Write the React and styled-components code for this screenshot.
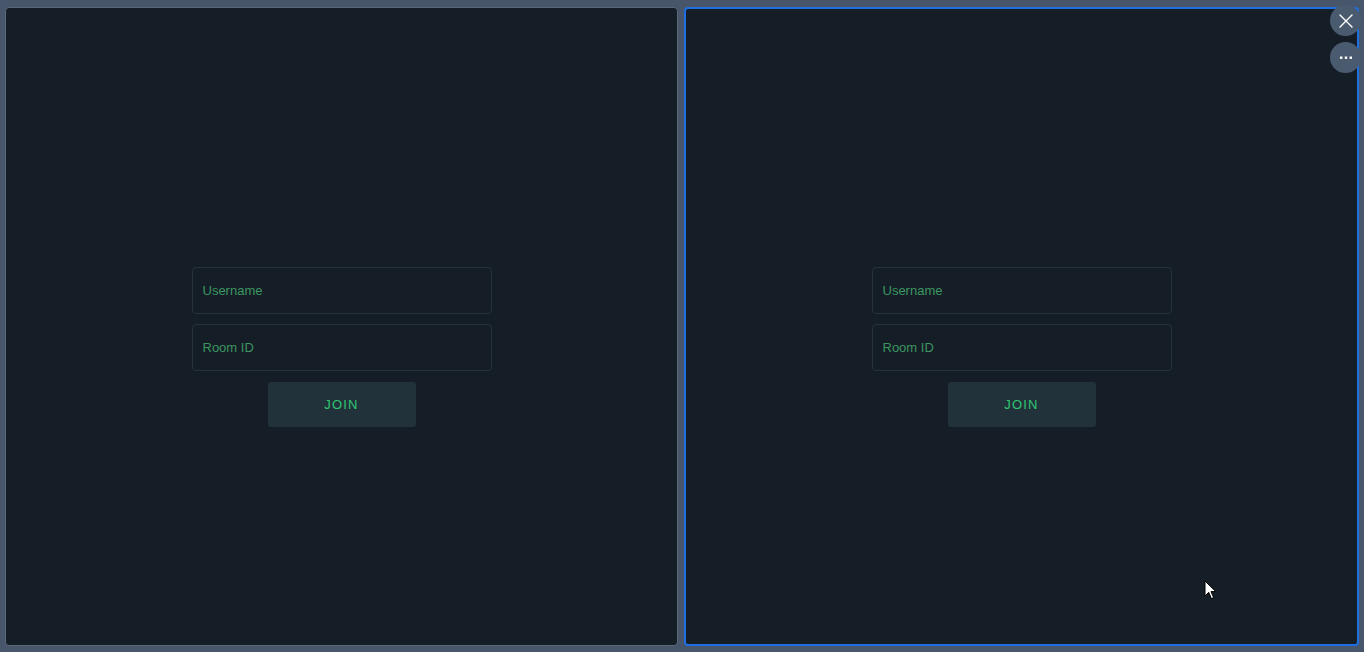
import React, { useState } from "react";
import styled, { createGlobalStyle } from "styled-components";

const GlobalStyle = createGlobalStyle`
  html, body {
    margin: 0;
    padding: 0;
    height: 100%;
    background: #47566a;
    font-family: "Liberation Sans", Arial, sans-serif;
  }
  #root {
    height: 100%;
  }
`;

function JoinForm() {
  const [username, setUsername] = useState("");
  const [room, setRoom] = useState("");

  return (
    <Form onSubmit={(e) => e.preventDefault()}>
      <Input
        placeholder="Username"
        value={username}
        onChange={(e) => setUsername(e.target.value)}
      />
      <Input
        placeholder="Room ID"
        value={room}
        onChange={(e) => setRoom(e.target.value)}
      />
      <JoinButton type="submit">JOIN</JoinButton>
    </Form>
  );
}

function App() {
  return (
    <>
      <GlobalStyle />
      <Screen>
        <Panel>
          <JoinForm />
        </Panel>
        <Panel active>
          <JoinForm />
          <Cursor viewBox="0 0 13 20">
            <path
              d="M1 1 L1 16 L4.7 12.3 L7.4 18.6 L9.6 17.6 L7 11.6 L11.8 11.6 Z"
              fill="#fff"
              stroke="#000"
              strokeWidth="1"
              strokeLinejoin="round"
            />
          </Cursor>
        </Panel>
        <Controls>
          <RoundButton aria-label="close">
            <svg width="14" height="14" viewBox="0 0 14 14">
              <path
                d="M1 1 L13 13 M13 1 L1 13"
                stroke="#fff"
                strokeWidth="1.4"
                strokeLinecap="round"
              />
            </svg>
          </RoundButton>
          <RoundButton aria-label="more">
            <svg width="14" height="4" viewBox="0 0 14 4">
              <rect x="1" y="0.5" width="2.4" height="2.4" fill="#fff" />
              <rect x="5.8" y="0.5" width="2.4" height="2.4" fill="#fff" />
              <rect x="10.6" y="0.5" width="2.4" height="2.4" fill="#fff" />
            </svg>
          </RoundButton>
        </Controls>
      </Screen>
    </>
  );
}

export default App;

const Screen = styled.div`
  position: relative;
  box-sizing: border-box;
  height: 652px;
  padding: 7px 5px 6px 5px;
  display: grid;
  grid-template-columns: 673px 675px;
  column-gap: 6px;
`;

const Panel = styled.div`
  position: relative;
  box-sizing: border-box;
  background: #151e27;
  border: 1px solid ${(props) => (props.active ? "#1f6fe0" : "#5b6878")};
  border-width: ${(props) => (props.active ? "2px" : "1px")};
  border-radius: 4px;
  display: flex;
  align-items: center;
  justify-content: center;
  padding-top: 41px;
`;

const Form = styled.form`
  display: flex;
  flex-direction: column;
  align-items: center;
  gap: 10px;
`;

const Input = styled.input`
  box-sizing: border-box;
  width: 300px;
  height: 47px;
  background: #151e27;
  border: 1px solid #26323c;
  border-radius: 4px;
  padding: 0 10px;
  font-family: "Liberation Sans", Arial, sans-serif;
  font-size: 13px;
  color: #3c9660;
  outline: none;

  &::placeholder {
    color: #3c9660;
  }
`;

const JoinButton = styled.button`
  box-sizing: border-box;
  width: 148px;
  height: 45px;
  margin-top: 1px;
  background: #22323b;
  border: none;
  border-radius: 3px;
  color: #2fc672;
  font-family: "Liberation Sans", Arial, sans-serif;
  font-size: 13px;
  letter-spacing: 1.2px;
  cursor: pointer;
`;

const Controls = styled.div`
  position: absolute;
  top: 5px;
  right: 3px;
  display: flex;
  flex-direction: column;
  gap: 6px;
`;

const RoundButton = styled.button`
  width: 31px;
  height: 31px;
  border-radius: 50%;
  border: none;
  padding: 0;
  background: #4a5a6f;
  display: flex;
  align-items: center;
  justify-content: center;
  cursor: pointer;
`;

const Cursor = styled.svg`
  position: absolute;
  left: 518px;
  top: 571px;
  width: 13px;
  height: 20px;
`;
